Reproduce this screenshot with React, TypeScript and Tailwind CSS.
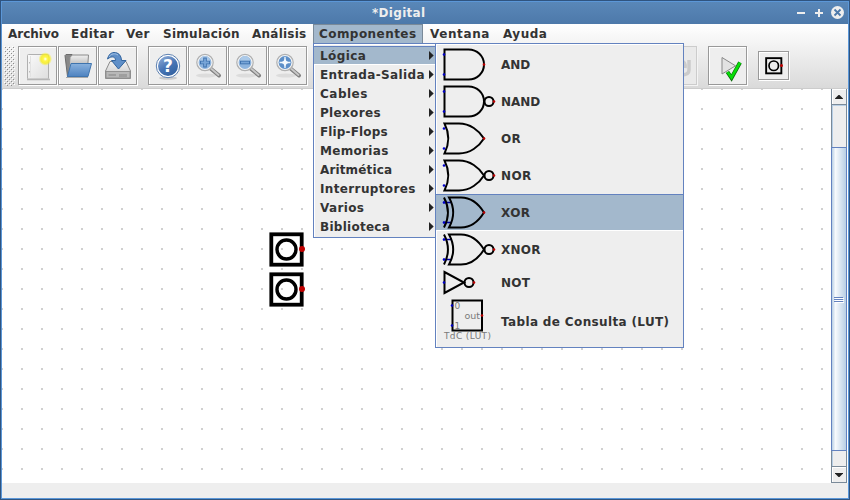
import React from 'react';

type Entry = { label: string; track: string };

const menus: (Entry & { width: string; active?: boolean })[] = [
  { label: 'Archivo', track: 'tracking-[0px]', width: 'w-[63px] pl-1.5' },
  { label: 'Editar', track: 'tracking-[0.45px]', width: 'w-[55px] pl-1.5' },
  { label: 'Ver', track: 'tracking-[0.4px]', width: 'w-[37px] pl-1.5' },
  { label: 'Simulación', track: 'tracking-[0.28px]', width: 'w-[89px] pl-1.5' },
  { label: 'Análisis', track: 'tracking-[0.24px]', width: 'w-[67px] pl-1.5' },
  { label: 'Componentes', track: 'tracking-[0.44px]', width: 'w-[110px] pl-1.5', active: true },
  { label: 'Ventana', track: 'tracking-[0.6px]', width: 'w-[73px] pl-[7px]' },
  { label: 'Ayuda', track: 'tracking-[0.5px]', width: 'w-[60px] pl-[7px]' },
];

const categories: Entry[] = [
  { label: 'Lógica', track: 'tracking-[0.4px]' },
  { label: 'Entrada-Salida', track: 'tracking-[0.36px]' },
  { label: 'Cables', track: 'tracking-[0.5px]' },
  { label: 'Plexores', track: 'tracking-[0.33px]' },
  { label: 'Flip-Flops', track: 'tracking-[0.15px]' },
  { label: 'Memorias', track: 'tracking-[0.32px]' },
  { label: 'Aritmética', track: 'tracking-[0.14px]' },
  { label: 'Interruptores', track: 'tracking-[0.36px]' },
  { label: 'Varios', track: 'tracking-[0.37px]' },
  { label: 'Biblioteca', track: 'tracking-[0.27px]' },
];

const Pin = ({ x, y, red }: { x: number; y: number; red?: boolean }) => (
  <circle cx={x} cy={y} r="1.3" fill={red ? '#c00000' : '#0000c8'} stroke="none" />
);

type GateKind = 'and' | 'or' | 'xor' | 'not' | 'lut';

function Gate({ kind, invert }: { kind: GateKind; invert?: boolean }) {
  const h = kind === 'not' ? 29 : kind === 'lut' ? 49 : 37;
  return (
    <svg width="60" height={h} className="shrink-0" fill="none" stroke="#000" strokeWidth="2">
      {kind === 'and' && <path d="M4.5 3.5H28.5C37 3.5 44 10 44 18.5S37 33.5 28.5 33.5H4.5Z" />}
      {kind === 'or' && <path d="M4.5 3.5H19C30 3.5 39 10.5 44 18.5C39 26.5 30 33.5 19 33.5H4.5C9.3 24 9.3 13 4.5 3.5Z" />}
      {kind === 'xor' && (
        <>
          <path d="M3 8.5H12M3 28.5H12" stroke="#0000a0" strokeWidth="1.5" />
          <path d="M4 3.5C9 13 9 24 4 33.5" />
          <path d="M9 3.5H21C31 3.5 39 10.5 44 18.5C39 26.5 31 33.5 21 33.5H9C14.3 24 14.3 13 9 3.5Z" />
        </>
      )}
      {(kind === 'and' || kind === 'or' || kind === 'xor') && (
        <>
          <Pin x={4} y={8.5} />
          <Pin x={4} y={28.5} />
          {invert && <circle cx="49" cy="18.5" r="4.5" />}
          <Pin x={invert ? 54 : 44} y={18.5} red />
        </>
      )}
      {kind === 'not' && (
        <>
          <path d="M4.5 4V25L24 14.5Z" />
          <circle cx="29" cy="14.5" r="4.5" />
          <Pin x={4} y={14.5} />
          <Pin x={34} y={14.5} red />
        </>
      )}
      {kind === 'lut' && (
        <>
          <g fill="#7a7a7a" stroke="none" fontFamily="DejaVu Sans, sans-serif" fontWeight="400" letterSpacing="0">
            <text x="14.5" y="11.5" fontSize="9">0</text>
            <text x="24.5" y="21.5" fontSize="9.5">out</text>
            <text x="14.5" y="31.5" fontSize="9">1</text>
            <text x="4" y="42" fontSize="9" textLength="47">TdC (LUT)</text>
          </g>
          <rect x="12.5" y="3.5" width="29.5" height="30" />
          <Pin x={12} y={8.5} />
          <Pin x={12} y={28.5} />
          <Pin x={42} y={18.5} red />
        </>
      )}
    </svg>
  );
}

const gates: (Entry & { kind: GateKind; invert?: boolean; height: string; active?: boolean })[] = [
  { label: 'AND', track: 'tracking-[0px]', kind: 'and', height: 'h-[37px]' },
  { label: 'NAND', track: 'tracking-[0px]', kind: 'and', invert: true, height: 'h-[37px]' },
  { label: 'OR', track: 'tracking-[0.4px]', kind: 'or', height: 'h-[37px]' },
  { label: 'NOR', track: 'tracking-[0.35px]', kind: 'or', invert: true, height: 'h-[37px]' },
  { label: 'XOR', track: 'tracking-[0.4px]', kind: 'xor', height: 'h-[37px]', active: true },
  { label: 'XNOR', track: 'tracking-[0.25px]', kind: 'xor', invert: true, height: 'h-[37px]' },
  { label: 'NOT', track: 'tracking-[0.25px]', kind: 'not', height: 'h-[29px]' },
  { label: 'Tabla de Consulta (LUT)', track: 'tracking-[0.36px]', kind: 'lut', height: 'h-[49px]' },
];

function ToolButton({ children }: { children?: React.ReactNode }) {
  return (
    <div className="flex h-[39px] w-[39px] shrink-0 items-center justify-center border border-[#999] bg-[#eee] shadow-[1px_1px_0_#fff,inset_1px_1px_0_#fff]">
      {children}
    </div>
  );
}

const NewIcon = () => (
  <svg width="32" height="32">
    <defs>
      <radialGradient id="glow">
        <stop offset="0" stopColor="#fff" />
        <stop offset=".3" stopColor="#fff64a" />
        <stop offset=".65" stopColor="#f8ee20" stopOpacity=".85" />
        <stop offset="1" stopColor="#f8ee20" stopOpacity="0" />
      </radialGradient>
      <linearGradient id="sheet" x2="1" y2="1">
        <stop offset="0" stopColor="#fafafa" />
        <stop offset="1" stopColor="#dedede" />
      </linearGradient>
    </defs>
    <path d="M5 29.5H28" stroke="#999" strokeWidth="1.6" opacity=".6" />
    <rect x="5.5" y="4.5" width="21" height="24.5" rx="1" fill="url(#sheet)" stroke="#b0b0b0" />
    <path d="M8.5 6V27" stroke="#e2e2e2" />
    <path d="M7.5 12v1.5M7.5 21v1.5" stroke="#bbb" />
    <circle cx="23.3" cy="9" r="6.8" fill="url(#glow)" />
  </svg>
);

const OpenIcon = () => (
  <svg width="32" height="32">
    <defs>
      <linearGradient id="folder" x2="0" y2="1">
        <stop offset="0" stopColor="#8ab2de" />
        <stop offset="1" stopColor="#4d82c0" />
      </linearGradient>
      <linearGradient id="paper" x2="0" y2="1">
        <stop offset="0" stopColor="#f0f0f0" />
        <stop offset="1" stopColor="#a8a8a8" />
      </linearGradient>
    </defs>
    <path d="M3 5.5L4 4.5H10L11 6H24L25 26.5H5.5Z" fill="#888" stroke="#6c6c6c" />
    <path d="M8 7.5L10 5H26.5L25.5 19H7Z" fill="url(#paper)" stroke="#8a8a8a" />
    <path d="M9 13.5H29.5L26 26.5H5.5Z" fill="url(#folder)" stroke="#3f74ae" />
    <path d="M4 27.5H26" stroke="#666" opacity=".5" />
  </svg>
);

const SaveIcon = () => (
  <svg width="32" height="32">
    <defs>
      <linearGradient id="disk" x2="0" y2="1">
        <stop offset="0" stopColor="#f2f2f2" />
        <stop offset="1" stopColor="#c4c4c4" />
      </linearGradient>
    </defs>
    <path d="M3.5 21L8 11.5H24L28.5 21V28.5H3.5Z" fill="url(#disk)" stroke="#8a8a8a" />
    <path d="M4 21.5H28V28H4Z" fill="#b8b8b8" stroke="#929292" />
    <path d="M6.5 25H14M18 24v3M20 24v3M22 24v3M24 24v3" stroke="#858585" />
    <path d="M5.5 9C7 3 11 1.5 15 3C18 4 19.5 7.5 19.5 10.5H24L16.5 19L9.5 10.5H13.5C13.5 6.5 10 5.5 5.5 9Z" fill="#5f8fc8" stroke="#31649f" />
    <path d="M7 7C9 3.5 13 3 16 5" stroke="#a3c2e5" fill="none" />
  </svg>
);

const HelpIcon = () => (
  <svg width="32" height="32">
    <defs>
      <linearGradient id="help" x1=".2" x2=".8" y2="1">
        <stop offset="0" stopColor="#8aa8d4" />
        <stop offset=".5" stopColor="#4875b5" />
        <stop offset="1" stopColor="#30609f" />
      </linearGradient>
    </defs>
    <ellipse cx="16" cy="28" rx="9" ry="1.8" fill="#ccc" />
    <circle cx="16" cy="16" r="11.7" fill="#fff" stroke="#5b7fb0" />
    <circle cx="16" cy="16" r="10" fill="url(#help)" />
    <text x="16" y="22" fontFamily="DejaVu Sans, sans-serif" fontWeight="bold" fontSize="17" textAnchor="middle" fill="#fff">?</text>
  </svg>
);

function ZoomIcon({ mark }: { mark: 'in' | 'out' | 'fit' }) {
  return (
    <svg width="32" height="32" fill="none">
      <ellipse cx="14" cy="25.5" rx="10" ry="2" fill="#dcdcdc" />
      <path d="M18.5 18.5L27 25.5" stroke="#808080" strokeWidth="4" strokeLinecap="round" />
      <path d="M18.5 18L26.5 25" stroke="#c8c8c8" strokeWidth="1.8" strokeLinecap="round" />
      <circle cx="13" cy="12.5" r="8" fill="#8eb4de" stroke="#b0b0b0" strokeWidth="1.6" />
      <circle cx="13" cy="12.5" r="7" stroke="#f2f2f2" strokeWidth="1.2" />
      <path d="M8 11A5 5 0 0 1 18 11" fill="#abc9e8" />
      {mark === 'fit' ? (
        <>
          <circle cx="13" cy="12.5" r="6.2" fill="#5d8fc8" />
          <path d="M13 7V18M7.5 12.5H18.5" stroke="#eef5fc" strokeWidth="1.4" />
          <path d="M13 8.5L14.5 11L17 12.5L14.5 14L13 16.5L11.5 14L9 12.5L11.5 11Z" fill="#f4f9fe" />
        </>
      ) : (
        <>
          <path d={mark === 'in' ? 'M13 7.5V17.5M8 12.5H18' : 'M8 12.5H18'} stroke="#3f72ae" strokeWidth="3.6" />
          <path d={mark === 'in' ? 'M13 8.5V16.5M9 12.5H17' : 'M9 12.5H17'} stroke="#78a5d8" strokeWidth="1.8" />
        </>
      )}
    </svg>
  );
}

const CheckIcon = () => (
  <svg width="32" height="32" fill="none">
    <path d="M10 7.5V24L23.5 15.8Z" fill="#e2e2e2" stroke="#888" />
    <path d="M15.5 22L19.5 28L28 12.5" stroke="#0a6a0a" strokeWidth="4" />
    <path d="M15.5 22L19.5 27.5L28 12.5" stroke="#08dd08" strokeWidth="2.6" />
  </svg>
);

function InputSymbol({ size }: { size: number }) {
  return (
    <svg width={size} height={size} viewBox="0 0 36 36" fill="none" stroke="#000" className="shrink-0">
      <rect x="2.3" y="2.3" width="30.4" height="30.4" strokeWidth="3.8" />
      <circle cx="17.5" cy="17.5" r="9.5" strokeWidth="3.4" />
      <circle cx="33" cy="17" r="3" fill="#c00000" stroke="none" />
    </svg>
  );
}

export default function App() {
  return (
    <div className="relative flex h-[500px] w-[850px] flex-col overflow-hidden border border-[#2f5480] bg-[#eee] font-['DejaVu_Sans',sans-serif] text-[12px] font-bold text-[#333]">
      <div className="flex min-h-0 flex-1 flex-col border border-[#5b97d8]">
        <header className="flex h-[22px] shrink-0 items-center bg-linear-to-b from-[#5987b8] to-[#4d79aa] pl-[370px] text-[#eee]">
          <span className="w-[420px] tracking-[0.3px]">*Digital</span>
          <svg width="56" height="22" stroke="#eee" strokeWidth="2" fill="none">
            <path d="M5 11H13M23 11H31M27 7V15" />
            <circle cx="45.5" cy="10.5" r="6.5" fill="#eee" stroke="none" />
            <path d="M42.5 7.5L48.5 13.5M48.5 7.5L42.5 13.5" stroke="#4d79aa" strokeWidth="1.8" />
          </svg>
        </header>

        <div className="flex h-[65px] shrink-0 flex-col border-b border-[#ccc] bg-linear-to-b from-white to-[#dadada]">
          <nav className="flex h-5 shrink-0">
            {menus.map((m) => (
              <div
                key={m.label}
                className={`flex h-5 shrink-0 items-center whitespace-nowrap ${m.width} ${m.track} ${m.active ? 'bg-[#a3b8cc] shadow-[inset_1px_1px_0_#7a8a99,inset_-1px_0_0_#7a8a99]' : ''}`}
              >
                {m.label}
              </div>
            ))}
          </nav>
          <div className="flex h-[44px] items-start pt-0.5 pl-0.5">
            <svg width="11" height="40" className="mr-[3px] shrink-0">
              <defs>
                <pattern id="grip" width="4" height="4" patternUnits="userSpaceOnUse">
                  <rect x="1" y="1" width="1" height="1" fill="#8c8c8c" />
                  <rect x="3" y="3" width="1" height="1" fill="#8c8c8c" />
                  <rect x="2" y="2" width="1" height="1" fill="#fff" />
                  <rect width="1" height="1" fill="#fff" />
                </pattern>
              </defs>
              <rect width="11" height="40" fill="url(#grip)" />
            </svg>
            <div className="flex gap-px">
              <ToolButton><NewIcon /></ToolButton>
              <ToolButton><OpenIcon /></ToolButton>
              <ToolButton><SaveIcon /></ToolButton>
            </div>
            <div className="ml-[11px] flex gap-px">
              <ToolButton><HelpIcon /></ToolButton>
              <ToolButton><ZoomIcon mark="in" /></ToolButton>
              <ToolButton><ZoomIcon mark="out" /></ToolButton>
              <ToolButton><ZoomIcon mark="fit" /></ToolButton>
            </div>
            <div className="ml-[351px] flex h-[39px] w-[39px] items-center justify-center border border-[#ccc] bg-[#eaeaea] shadow-[1px_1px_0_#f4f4f4]">
              <svg width="32" height="32" fill="none" stroke="#cbcbcb" strokeWidth="3.5">
                <path d="M27 10V20Q27 25 19 25M19 11Q24 12 23 18" />
              </svg>
            </div>
            <div className="ml-[11px]"><ToolButton><CheckIcon /></ToolButton></div>
            <div className="mt-[5px] ml-[11px] flex h-[29px] w-[31px] items-center justify-center border border-[#999] bg-[#eee] shadow-[1px_1px_0_#fff,inset_1px_1px_0_#fff]">
              <InputSymbol size={18} />
            </div>
          </div>
        </div>

        <div className="flex h-[394px] shrink-0 bg-white">
          <main className="relative w-[829px] overflow-hidden">
            <svg width="829" height="394">
              <defs>
                <pattern id="grid" x="-1" y="-1" width="20" height="20" patternUnits="userSpaceOnUse">
                  <rect width="2" height="2" fill="#d0d0d0" />
                </pattern>
              </defs>
              <rect width="829" height="394" fill="url(#grid)" />
            </svg>
            <div className="absolute top-[143px] left-[267px] flex flex-col gap-1">
              <InputSymbol size={36} />
              <InputSymbol size={36} />
            </div>
          </main>
          <aside className="flex w-4 flex-col border-x border-[#7a8a99] bg-[#eee]">
            <div className="flex h-4 items-center justify-center border-b border-[#7a8a99] shadow-[inset_1px_1px_0_#fff]">
              <svg width="8" height="4"><path d="M-0.5 4L3.5 0H4.5L8.5 4Z" fill="#222" /></svg>
            </div>
            <div className="h-[42px] border-t border-l border-[#b8cfe5]" />
            <div className="flex h-[304px] items-center justify-center border-y border-[#6382bf] bg-linear-to-r from-[#b8cfe5] via-[#f6f9fc] via-25% to-[#b8cfe5] shadow-[-1px_0_0_#6382bf,1px_0_0_#6382bf]">
              <svg width="10" height="6" className="relative top-px"><path d="M0 .5H9M0 2.5H9M0 4.5H9" stroke="#6382bf" /><path d="M1 1.5H10M1 3.5H10M1 5.5H10" stroke="#fff" /></svg>
            </div>
            <div className="h-[15px] border-l border-[#b8cfe5]" />
            <div className="flex flex-1 items-center justify-center border-y border-[#7a8a99] shadow-[inset_1px_1px_0_#fff]">
              <svg width="8" height="4"><path d="M-0.5 0H8.5L4.5 4H3.5Z" fill="#222" /></svg>
            </div>
          </aside>
        </div>
      </div>

      <div className="absolute top-[42px] left-[312px] w-[123px] border border-[#6382bf] bg-[#eee] pt-0.5 pb-px shadow-[inset_1px_1px_0_#fff]">
        {categories.map((c, i) => (
          <div
            key={c.label}
            className={`flex h-[19px] items-center justify-between border-y pr-px pl-1.5 whitespace-nowrap ${c.track} ${i === 0 ? 'border-t-[#6382bf] border-b-white bg-[#a3b8cc]' : 'border-transparent'}`}
          >
            <span>{c.label}</span>
            <svg width="5" height="9" className="shrink-0"><path d="M0 0L4.7 4.5L0 9Z" fill="#222" /></svg>
          </div>
        ))}
      </div>

      <div className="absolute top-[42px] left-[434px] w-[249px] border border-[#6382bf] bg-[#eee] pt-0.5 pb-px shadow-[inset_1px_1px_0_#fff]">
        {gates.map((g) => (
          <div
            key={g.label}
            className={`flex items-center pl-1 whitespace-nowrap ${g.height} ${g.track} ${g.active ? 'bg-[#a3b8cc] shadow-[inset_0_1px_0_#6382bf,inset_0_-1px_0_#fff]' : ''}`}
          >
            <Gate kind={g.kind} invert={g.invert} />
            <span className="pl-px">{g.label}</span>
          </div>
        ))}
      </div>
    </div>
  );
}
